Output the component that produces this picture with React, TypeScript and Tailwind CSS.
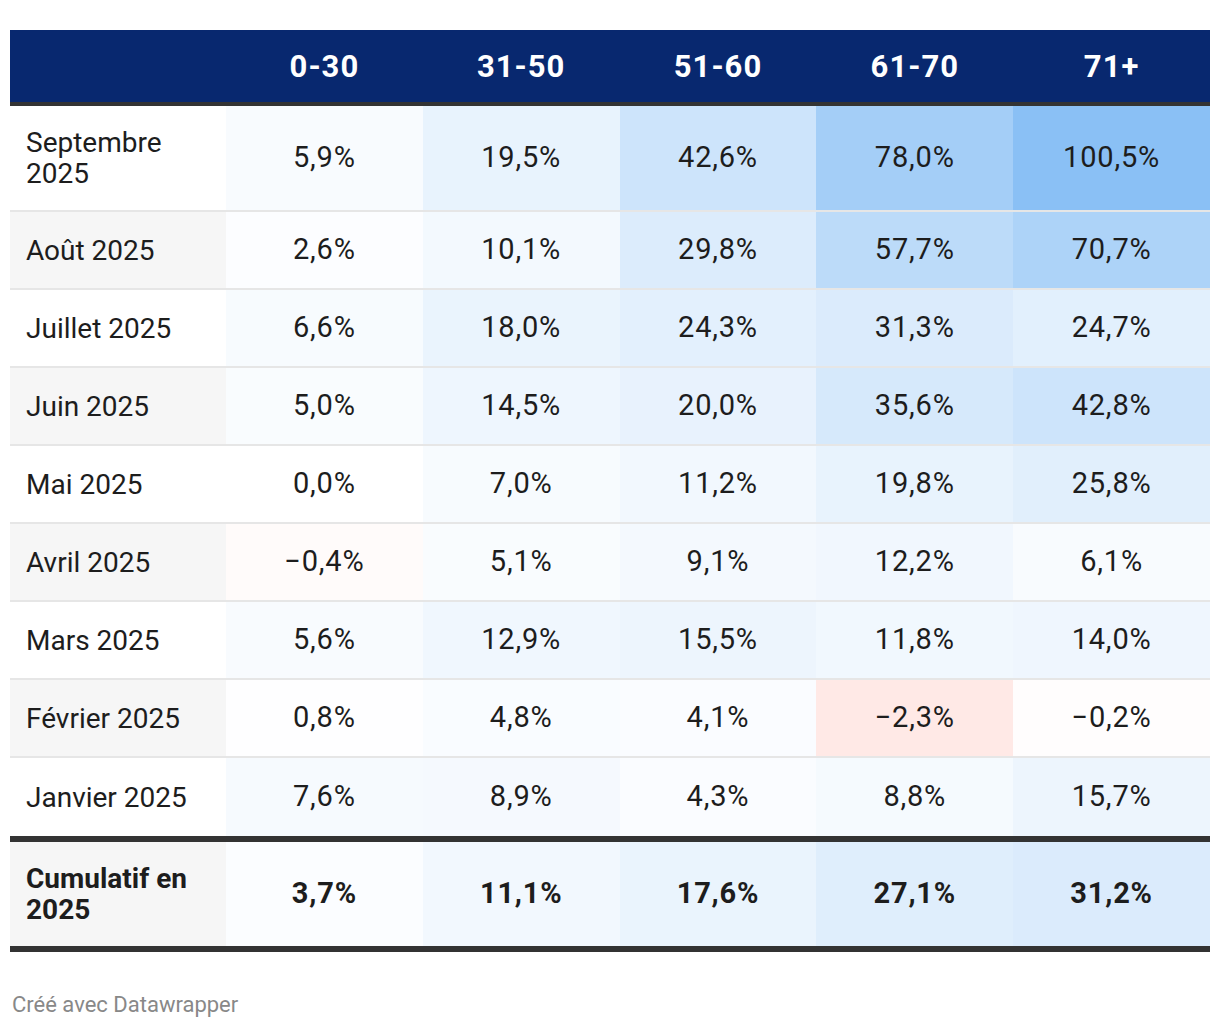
import React from "react";

type Cell = { v: string; bg: string };
type Row = { label: string; gray: boolean; cells: Cell[]; tall?: boolean };

const rows: Row[] = [
  {
    label: "Septembre 2025",
    gray: false,
    tall: true,
    cells: [
      { v: "5,9%", bg: "bg-[#f8fbfe]" },
      { v: "19,5%", bg: "bg-[#e8f3fd]" },
      { v: "42,6%", bg: "bg-[#cde4fb]" },
      { v: "78,0%", bg: "bg-[#a4cef7]" },
      { v: "100,5%", bg: "bg-[#8ac0f5]" },
    ],
  },
  {
    label: "Août 2025",
    gray: true,
    cells: [
      { v: "2,6%", bg: "bg-[#fcfdff]" },
      { v: "10,1%", bg: "bg-[#f3f9fe]" },
      { v: "29,8%", bg: "bg-[#dcecfc]" },
      { v: "57,7%", bg: "bg-[#bcdbf9]" },
      { v: "70,7%", bg: "bg-[#add3f8]" },
    ],
  },
  {
    label: "Juillet 2025",
    gray: false,
    cells: [
      { v: "6,6%", bg: "bg-[#f7fbfe]" },
      { v: "18,0%", bg: "bg-[#eaf4fd]" },
      { v: "24,3%", bg: "bg-[#e3f0fd]" },
      { v: "31,3%", bg: "bg-[#dbebfc]" },
      { v: "24,7%", bg: "bg-[#e2f0fd]" },
    ],
  },
  {
    label: "Juin 2025",
    gray: true,
    cells: [
      { v: "5,0%", bg: "bg-[#f9fcfe]" },
      { v: "14,5%", bg: "bg-[#eef6fe]" },
      { v: "20,0%", bg: "bg-[#e8f2fd]" },
      { v: "35,6%", bg: "bg-[#d6e9fb]" },
      { v: "42,8%", bg: "bg-[#cde4fb]" },
    ],
  },
  {
    label: "Mai 2025",
    gray: false,
    cells: [
      { v: "0,0%", bg: "bg-[#ffffff]" },
      { v: "7,0%", bg: "bg-[#f7fbfe]" },
      { v: "11,2%", bg: "bg-[#f2f8fe]" },
      { v: "19,8%", bg: "bg-[#e8f3fd]" },
      { v: "25,8%", bg: "bg-[#e1effc]" },
    ],
  },
  {
    label: "Avril 2025",
    gray: true,
    cells: [
      { v: "\u22120,4%", bg: "bg-[#fffbfa]" },
      { v: "5,1%", bg: "bg-[#f9fcfe]" },
      { v: "9,1%", bg: "bg-[#f4f9fe]" },
      { v: "12,2%", bg: "bg-[#f1f7fe]" },
      { v: "6,1%", bg: "bg-[#f8fbfe]" },
    ],
  },
  {
    label: "Mars 2025",
    gray: false,
    cells: [
      { v: "5,6%", bg: "bg-[#f8fbfe]" },
      { v: "12,9%", bg: "bg-[#f0f7fe]" },
      { v: "15,5%", bg: "bg-[#edf5fd]" },
      { v: "11,8%", bg: "bg-[#f1f8fe]" },
      { v: "14,0%", bg: "bg-[#eff6fe]" },
    ],
  },
  {
    label: "Février 2025",
    gray: true,
    cells: [
      { v: "0,8%", bg: "bg-[#fefeff]" },
      { v: "4,8%", bg: "bg-[#f9fcff]" },
      { v: "4,1%", bg: "bg-[#fafcff]" },
      { v: "\u22122,3%", bg: "bg-[#ffe9e6]" },
      { v: "\u22120,2%", bg: "bg-[#fffdfd]" },
    ],
  },
  {
    label: "Janvier 2025",
    gray: false,
    cells: [
      { v: "7,6%", bg: "bg-[#f6fafe]" },
      { v: "8,9%", bg: "bg-[#f5f9fe]" },
      { v: "4,3%", bg: "bg-[#fafcff]" },
      { v: "8,8%", bg: "bg-[#f5fafe]" },
      { v: "15,7%", bg: "bg-[#edf5fd]" },
    ],
  },
];

const total: Cell[] = [
  { v: "3,7%", bg: "bg-[#fbfdff]" },
  { v: "11,1%", bg: "bg-[#f2f8fe]" },
  { v: "17,6%", bg: "bg-[#eaf4fd]" },
  { v: "27,1%", bg: "bg-[#dfeefc]" },
  { v: "31,2%", bg: "bg-[#dbebfc]" },
];

const headers = ["0-30", "31-50", "51-60", "61-70", "71+"];

export default function App() {
  return (
    <div className="w-[1220px] h-[1026px] bg-white font-['Roboto','Liberation_Sans',sans-serif] text-[#1d1d1d]">
      <div className="px-[10px] pt-[30px]">
        <div className="grid grid-cols-[216px_repeat(5,1fr)] h-[76px] pt-[3px] bg-[#08286f] border-b-4 border-[#333333]">
          <div />
          {headers.map((h) => (
            <div
              key={h}
              className="flex items-center justify-center text-white font-bold text-[31px] tracking-[1px]"
            >
              {h}
            </div>
          ))}
        </div>
        {rows.map((r, i) => (
          <div
            key={r.label}
            className={`grid grid-cols-[216px_repeat(5,1fr)] ${r.tall ? "h-[106px]" : "h-[78px]"} ${
              i < rows.length - 1 ? "border-b-2 border-[#e6e6e6]" : ""
            }`}
          >
            <div
              className={`flex items-center pl-[16px] pr-[10px] text-[28px] leading-[31px] ${
                r.gray ? "bg-[#f6f6f6]" : "bg-white"
              }`}
            >
              {r.label}
            </div>
            {r.cells.map((c, j) => (
              <div
                key={j}
                className={`flex items-center justify-center text-[29px] tracking-[0.8px] ${c.bg}`}
              >
                {c.v}
              </div>
            ))}
          </div>
        ))}
        <div className="grid grid-cols-[216px_repeat(5,1fr)] h-[116px] border-t-[6px] border-b-[6px] border-[#333333] font-bold">
          <div className="flex items-center pl-[16px] pr-[10px] text-[28px] leading-[31px] bg-[#f6f6f6]">
            Cumulatif en 2025
          </div>
          {total.map((c, j) => (
            <div
              key={j}
              className={`flex items-center justify-center text-[29px] tracking-[0.8px] ${c.bg}`}
            >
              {c.v}
            </div>
          ))}
        </div>
        <div className="pt-[40px] pl-[2px] text-[22px] leading-[26px] text-[#888888]">Créé avec Datawrapper</div>
      </div>
    </div>
  );
}
